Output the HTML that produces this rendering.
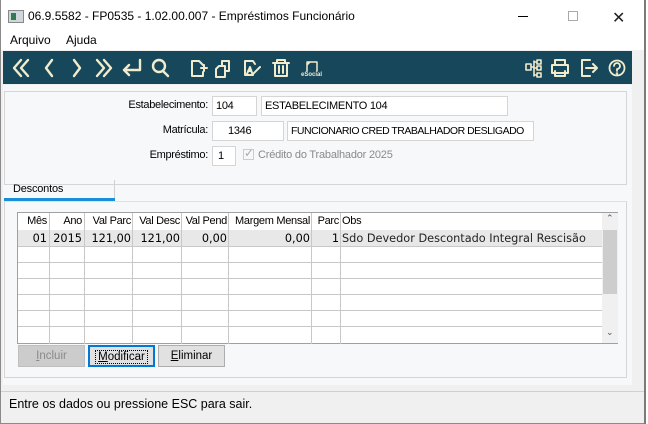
<!DOCTYPE html>
<html><head><meta charset="utf-8"><style>
*{margin:0;padding:0;box-sizing:border-box}
body{width:648px;height:424px;background:#fff;font-family:"Liberation Sans",sans-serif;font-size:12px;color:#000;position:relative;overflow:hidden}
.a{position:absolute;white-space:nowrap}
.in{position:absolute;white-space:nowrap;overflow:hidden;background:#fff;border:1px solid #d5d5d5;height:20px;line-height:18px;padding-left:3px;font-size:11px;letter-spacing:-0.3px}
.lbl{position:absolute;text-align:right;font-size:11px;letter-spacing:-0.3px;white-space:nowrap}
.col{position:absolute;top:0;height:131px;border-left:1px solid #c8c8c8}
.hl{position:absolute;left:0;width:584px;border-top:1px solid #c8c8c8}
.h{position:absolute;top:2px;font-size:11px;letter-spacing:-0.3px;text-align:right;white-space:nowrap}
.d{position:absolute;top:19px;font-family:"DejaVu Sans",sans-serif;font-size:11.3px;text-align:right;white-space:nowrap}
.btn{position:absolute;top:345px;height:22px;width:67px;border:1px solid #adadad;background:#e1e1e1;text-align:center;line-height:20px;font-size:11.5px}
</style></head><body>
<div class="a" style="left:0;top:0;width:646px;height:424px;border:1px solid #8a8a8a;border-top:none"></div>
<div class="a" style="left:644px;top:0;width:2px;height:424px;background:#7a7a7a"></div>
<div class="a" style="left:8px;top:10px;width:16px;height:13px;background:#cfd6dc;border:1px solid #888"><div style="position:absolute;left:2px;top:2px;width:5px;height:7px;background:#2f7d4f"></div></div>
<div class="a" style="left:28px;top:9px;font-size:12px">06.9.5582 - FP0535 - 1.02.00.007 - Empréstimos Funcionário</div>
<div class="a" style="left:518px;top:16px;width:10px;border-top:1px solid #000"></div>
<div class="a" style="left:568px;top:11px;width:10px;height:10px;border:1px solid #aaa"></div>
<div class="a" style="left:612px;top:8px;font-size:16px;color:#222">✕</div>
<div class="a" style="left:10px;top:33px">Arquivo</div>
<div class="a" style="left:66px;top:33px">Ajuda</div>
<div class="a" style="left:1px;top:50px;width:643px;height:373px;background:#f0f0f0"></div>
<div class="a" style="left:3px;top:85px;width:629px;height:300px;background:#f7f8fa"></div>
<div class="a" style="left:3px;top:51px;width:629px;height:33px;background:#17475a"></div>
<svg class="a" width="640" height="28" style="left:0;top:54px" fill="none" stroke="#f2ebcc" stroke-width="2.4" stroke-linecap="round" stroke-linejoin="round">
<path d="M21 6l-7 8 7 8M28 6l-7 8 7 8"/>
<path d="M52 6l-6 8 6 8"/>
<path d="M74 6l6 8-6 8"/>
<path d="M97 6l7 8-7 8M104 6l7 8-7 8"/>
<path d="M140 6v10h-16M129 11l-5 5 5 5"/>
<circle cx="159" cy="12" r="6"/><path d="M163 17l5 5"/>
<path d="M199 7h-7v15h11v-4M199 7l4 4M201 14h6M204 11v6" stroke-width="2"/>
<path d="M219 12h6v11h-9v-8zM222 12v-5h7v10h-4" stroke-width="2"/>
<path d="M253 21h-8V7h8l2 3M247 20l3-7 2 6M248 17h3M252 21l8-8" stroke-width="2"/>
<path d="M273 9h16M277 9V6h8v3M275 9v13h12V9M279 12v7M283 12v7" stroke-width="2"/>
<path d="M307 17v-9h10v9M307 11l3-3" stroke-width="1.5"/>
<path d="M526 10h5v6h-5zM531 13h3M534 7v15M534 8h3M534 14h3M534 21h3M537 6h4v4h-4zM537 12h4v4h-4zM537 19h4v4h-4z" stroke-width="1.6"/>
<path d="M552 11h16v8h-16zM555 11V6h10v5M555 17v5h10v-5" stroke-width="2"/>
<path d="M590 6h-8v16h8M586 14h11M593 10l4 4-4 4" stroke-width="2"/>
<circle cx="617" cy="14" r="7.5" stroke-width="1.8"/><path d="M614 12a3 3 0 1 1 3 3v2" stroke-width="1.8"/><circle cx="617" cy="19.5" r=".5" stroke-width="1.5"/>
</svg>
<div class="a" style="left:301px;top:72px;font-size:6px;color:#f2ebcc;font-weight:bold">eSocial</div>
<div class="a" style="left:4px;top:91px;width:623px;height:94px;border:1px solid #d5d5d5;background:#f7f8fa"></div>
<div class="lbl" style="left:100px;width:108px;top:99px">Estabelecimento:</div>
<div class="in" style="left:212px;top:96px;width:45px">104</div>
<div class="in" style="left:261px;top:96px;width:247px">ESTABELECIMENTO 104</div>
<div class="lbl" style="left:100px;width:108px;top:124px">Matrícula:</div>
<div class="in" style="left:212px;top:121px;width:72px;padding-left:15px">1346</div>
<div class="in" style="left:287px;top:121px;width:247px;font-size:10.5px;letter-spacing:-0.5px">FUNCIONARIO CRED TRABALHADOR DESLIGADO</div>
<div class="lbl" style="left:100px;width:108px;top:149px">Empréstimo:</div>
<div class="in" style="left:212px;top:146px;width:24px;padding-left:5px">1</div>
<div class="a" style="left:243px;top:149px;width:11px;height:11px;border:1px solid #ccc"></div>
<div class="a" style="left:244px;top:146px;color:#aaa;font-size:12px">✓</div>
<div class="a" style="left:258px;top:149px;color:#8a8a8a;font-size:11px;letter-spacing:-0.2px">Crédito do Trabalhador 2025</div>
<div class="a" style="left:13px;top:183px;font-size:11px;letter-spacing:-0.2px">Descontos</div>
<div class="a" style="left:114px;top:180px;height:20px;border-left:1px solid #d0d0d0"></div>
<div class="a" style="left:4px;top:198px;width:111px;height:3px;background:#1a8fd8"></div>
<div class="a" style="left:4px;top:201px;width:623px;height:177px;border:1px solid #d5d5d5;border-top-color:#e0e0e0"></div>
<div class="a" style="left:17px;top:212px;width:601px;height:132px;border:1px solid #a0a0a0;background:#fff">
<div class="a" style="left:0;top:17px;width:584px;height:16px;background:#e8e8e8"></div>
<div class="hl" style="top:33px"></div><div class="hl" style="top:49px"></div><div class="hl" style="top:65px"></div><div class="hl" style="top:81px"></div><div class="hl" style="top:97px"></div><div class="hl" style="top:113px"></div>
<div class="col" style="left:31px"></div><div class="col" style="left:66px"></div><div class="col" style="left:114px"></div><div class="col" style="left:163px"></div><div class="col" style="left:210px"></div><div class="col" style="left:293px"></div><div class="col" style="left:322px"></div>
<div class="h" style="left:0;width:29px">Mês</div><div class="h" style="left:31px;width:33px">Ano</div><div class="h" style="left:66px;width:47px">Val Parc</div><div class="h" style="left:114px;width:48px">Val Desc</div><div class="h" style="left:163px;width:46px">Val Pend</div><div class="h" style="left:210px;width:82px">Margem Mensal</div><div class="h" style="left:293px;width:28px">Parc</div><div class="h" style="left:324px">Obs</div>
<div class="d" style="left:0;width:29px">01</div><div class="d" style="left:31px;width:33px">2015</div><div class="d" style="left:66px;width:47px">121,00</div><div class="d" style="left:114px;width:48px">121,00</div><div class="d" style="left:163px;width:46px">0,00</div><div class="d" style="left:210px;width:82px">0,00</div><div class="d" style="left:293px;width:28px">1</div><div class="d" style="left:324px;text-align:left;color:#222">Sdo Devedor Descontado Integral Rescisão</div>
<div class="a" style="left:584px;top:0;width:16px;height:130px;background:#f0f0f0"></div>
<div class="a" style="left:585px;top:17px;width:14px;height:64px;background:#cdcdcd"></div>
<div class="a" style="left:588px;top:0;font-size:9px;color:#555">⌃</div>
<div class="a" style="left:588px;top:114px;font-size:9px;color:#555">⌄</div>
</div>
<div class="btn" style="left:18px;background:#cccccc;border-color:#bfbfbf;color:#8a8a8a"><u>I</u>ncluir</div>
<div class="btn" style="left:88px;border:2px solid #0078d7"><span style="outline:1px dotted #000;padding:0 2px"><u>M</u>odificar</span></div>
<div class="btn" style="left:158px"><u>E</u>liminar</div>
<div class="a" style="left:1px;top:391px;width:643px;border-top:1px solid #d0d0d0"></div>
<div class="a" style="left:9px;top:397px;font-size:12.5px">Entre os dados ou pressione ESC para sair.</div>
</body></html>
